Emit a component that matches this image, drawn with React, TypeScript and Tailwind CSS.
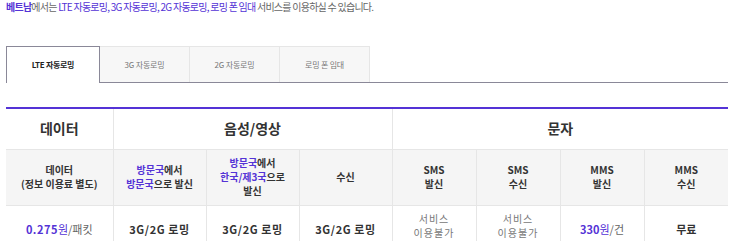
import React from "react";

const P = "text-[#5433d6]";

const tabs = ["LTE 자동로밍", "3G 자동로밍", "2G 자동로밍", "로밍 폰 임대"];

export default function App() {
  return (
    <div className="w-[750px] h-[241px] overflow-hidden bg-white font-['Noto_Sans_CJK_KR','Noto_Sans',sans-serif]">
      <div className="px-[6px]">
        <p className="text-[10px] leading-[14px] tracking-[-0.75px] text-[#666]">
          <span className={`font-bold ${P}`}>베트남</span>에서는{" "}
          <span className={P}>LTE 자동로밍, 3G 자동로밍, 2G 자동로밍, 로밍 폰 임대</span> 서비스를
          이용하실 수 있습니다.
        </p>

        {/* tabs */}
        <div className="mt-[32px] w-[722px] flex border-b border-[#8a8898] h-[37px]">
          {tabs.map((t, i) =>
            i === 0 ? (
              <div
                key={t}
                className="w-[94px] -mb-px bg-white border border-b-0 border-[#8a8898] flex items-center justify-center text-[8px] font-bold text-[#222] tracking-[-0.3px]"
              >
                {t}
              </div>
            ) : (
              <div
                key={t}
                className="w-[90px] bg-[#f7f7f7] border border-l-0 border-b-0 border-[#e6e6e6] flex items-center justify-center text-[8px] text-[#777] tracking-[-0.2px]"
              >
                {t}
              </div>
            ),
          )}
        </div>

        {/* table */}
        <table className="mt-[24px] w-[722px] table-fixed border-collapse border-t-2 border-[#5433d6] text-center text-[#333]">
          <colgroup>
            <col className="w-[107px]" />
            <col className="w-[93px]" />
            <col className="w-[93px]" />
            <col className="w-[93px]" />
            <col className="w-[84px]" />
            <col className="w-[84px]" />
            <col className="w-[84px]" />
            <col className="w-[84px]" />
          </colgroup>
          <thead>
            <tr className="h-[41px] text-[14px] font-bold">
              <th>데이터</th>
              <th colSpan={3} className="border-l border-[#e6e6e6]">
                음성/영상
              </th>
              <th colSpan={4} className="border-l border-[#e6e6e6]">
                문자
              </th>
            </tr>
            <tr className="h-[56px] bg-[#f5f5f5] text-[10px] leading-[14px] font-bold border-y border-[#e6e6e6]">
              <th>
                데이터
                <br />
                (정보 이용료 별도)
              </th>
              <th className="border-l border-[#e6e6e6]">
                <span className={P}>방문국</span>에서
                <br />
                <span className={P}>방문국</span>으로 발신
              </th>
              <th className="border-l border-[#e6e6e6]">
                <span className={P}>방문국</span>에서
                <br />
                <span className={P}>한국/제3국</span>으로
                <br />
                발신
              </th>
              <th className="border-l border-[#e6e6e6]">수신</th>
              <th className="border-l border-[#e6e6e6]">
                SMS
                <br />
                발신
              </th>
              <th className="border-l border-[#e6e6e6]">
                SMS
                <br />
                수신
              </th>
              <th className="border-l border-[#e6e6e6]">
                MMS
                <br />
                발신
              </th>
              <th className="border-l border-[#e6e6e6]">
                MMS
                <br />
                수신
              </th>
            </tr>
          </thead>
          <tbody>
            <tr className="h-[48px] text-[11px] font-bold">
              <td>
                <span className={`${P} tracking-[0.5px]`}>0.275</span>
                <span className={`${P} font-normal`}>원</span>
                <span className="font-normal text-[#666]">/패킷</span>
              </td>
              <td className="border-l border-[#e6e6e6] tracking-[0.6px]">3G/2G 로밍</td>
              <td className="border-l border-[#e6e6e6] tracking-[0.6px]">3G/2G 로밍</td>
              <td className="border-l border-[#e6e6e6] tracking-[0.6px]">3G/2G 로밍</td>
              <td className="border-l border-[#e6e6e6] font-normal text-[10px] leading-[14px] text-[#777] tracking-[1px] pb-[6px]">
                서비스
                <br />
                이용불가
              </td>
              <td className="border-l border-[#e6e6e6] font-normal text-[10px] leading-[14px] text-[#777] tracking-[1px] pb-[6px]">
                서비스
                <br />
                이용불가
              </td>
              <td className="border-l border-[#e6e6e6]">
                <span className={P}>330</span>
                <span className={`${P} font-normal`}>원</span>
                <span className="font-normal text-[#666]">/건</span>
              </td>
              <td className="border-l border-[#e6e6e6]">무료</td>
            </tr>
          </tbody>
        </table>
      </div>
    </div>
  );
}
